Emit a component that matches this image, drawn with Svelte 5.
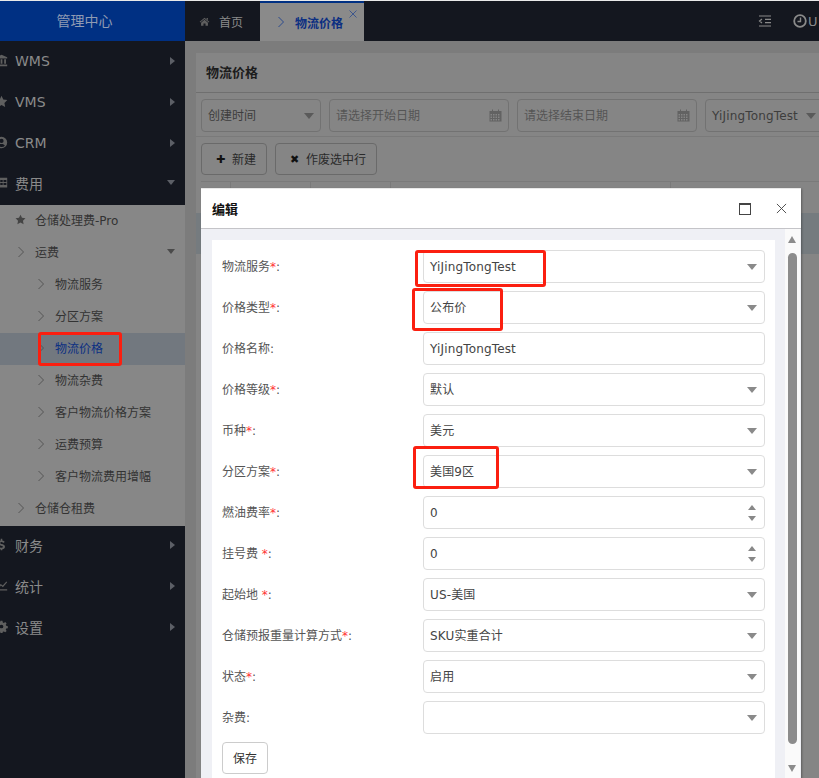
<script>
  const topMenu = [
    { icon: "bank", label: "WMS" },
    { icon: "star", label: "VMS" },
    { icon: "user", label: "CRM" },
    { icon: "table", label: "费用", open: true, cjk: true },
  ];
  const subMenu = [
    { label: "仓储处理费-Pro", level: 1, icon: "star" },
    { label: "运费", level: 1, open: true },
    { label: "物流服务", level: 2 },
    { label: "分区方案", level: 2 },
    { label: "物流价格", level: 2, active: true },
    { label: "物流杂费", level: 2 },
    { label: "客户物流价格方案", level: 2 },
    { label: "运费预算", level: 2 },
    { label: "客户物流费用增幅", level: 2 },
    { label: "仓储仓租费", level: 1 },
  ];
  const bottomMenu = [
    { icon: "money", label: "财务" },
    { icon: "chart", label: "统计" },
    { icon: "gear", label: "设置" },
  ];
  const fields = [
    { label: "物流服务", req: "*", value: "YiJingTongTest", type: "select" },
    { label: "价格类型", req: "*", value: "公布价", type: "select", cjk: true },
    { label: "价格名称", value: "YiJingTongTest", type: "text" },
    { label: "价格等级", req: "*", value: "默认", type: "select", cjk: true },
    { label: "币种", req: "*", value: "美元", type: "select", cjk: true },
    { label: "分区方案", req: "*", value: "美国9区", type: "select", cjk: true },
    { label: "燃油费率", req: "*", value: "0", type: "number" },
    { label: "挂号费 ", req: "*", value: "0", type: "number" },
    { label: "起始地 ", req: "*", value: "US-美国", type: "select", cjk: true },
    { label: "仓储预报重量计算方式", req: "*", value: "SKU实重合计", type: "select", cjk: true },
    { label: "状态", req: "*", value: "启用", type: "select", cjk: true },
    { label: "杂费", value: "", type: "select" },
  ];
</script>

{#snippet icon(name)}
  <svg class="ico" viewBox="0 0 16 16" fill="currentColor">
    {#if name === "bank"}
      <path d="M8 1l7 3v1.500H1V4zM2.500 6.500h2.200V12H2.500zM6.900 6.500h2.200V12H6.900zM11.300 6.500h2.200V12h-2.200zM1 13h14v2H1z" />
    {:else if name === "star"}
      <path d="M8 1l2.200 4.600 5 .7-3.600 3.500.9 5L8 12.400l-4.500 2.400.9-5L.8 6.300l5-.7z" />
    {:else if name === "user"}
      <path fill-rule="evenodd" d="M8 1a7 7 0 100 14A7 7 0 008 1zm0 2.500a2.600 2.600 0 110 5.200 2.600 2.600 0 010-5.200zM3.900 12c.6-1.600 2-2.300 4.100-2.300s3.500.7 4.100 2.300A5.500 5.500 0 018 13.500 5.500 5.500 0 013.900 12z" />
    {:else if name === "table"}
      <path fill-rule="evenodd" d="M1 2h14v12H1zm1 3v2.500h3.500V5zm4.500 0v2.500h3V5zm4 0v2.500H14V5zM2 8.500V11h3.500V8.500zm4.500 0V11h3V8.500zm4 0V11H14V8.500z" />
    {:else if name === "money"}
      <path d="M9 1v2c1.500.2 2.500 1 3 2l-2 1c-.4-.7-1-1-2-1-.9 0-1.500.4-1.500 1 0 .7.700 1 2.200 1.400C10.800 8 12.300 8.800 12.300 10.800c0 1.600-1.300 2.800-3.300 3.100V15H7v-1.100c-1.700-.2-2.800-1.100-3.300-2.300l2-1c.4.900 1.200 1.400 2.300 1.400 1.100 0 1.800-.4 1.800-1.100 0-.8-.7-1.100-2.300-1.500C5.600 8.900 4.100 8.100 4.100 6.200 4.100 4.600 5.300 3.400 7 3.100V1z" />
    {:else if name === "chart"}
      <path d="M1 2h1.500v10.500H15V14H1zM4 10l3-4 2.500 2L14 3l1 1-5.300 6L7.300 8l-2.300 3z" />
    {:else if name === "gear"}
      <path fill-rule="evenodd" d="M6.800 1h2.400l.4 2 1.300.6 1.700-1.100 1.700 1.700-1.100 1.700.6 1.300 2 .4v2.400l-2 .4-.6 1.300 1.100 1.700-1.700 1.700-1.700-1.100-1.300.6-.4 2H6.800l-.4-2-1.300-.6-1.700 1.100-1.700-1.700 1.100-1.700-.6-1.300-2-.4V6.600l2-.4.6-1.300-1.100-1.700 1.700-1.700 1.700 1.100 1.300-.6zM8 5.700a2.300 2.300 0 100 4.600 2.300 2.300 0 000-4.600z" />
    {/if}
  </svg>
{/snippet}

{#snippet chevron()}
  <svg class="chev" viewBox="0 0 8 12" fill="none" stroke="currentColor" stroke-width="1">
    <path d="M1.500 1l5 5-5 5" />
  </svg>
{/snippet}

{#snippet calendar()}
  <svg class="cal" viewBox="0 0 13 13" fill="currentColor">
    <path fill-rule="evenodd" d="M0.500 2h2.500V0.500h1V2h5V0.500h1V2h2.500v10.500H0.500zm1 3v1.500H3V5zm2.500 0v1.500h1.500V5zm2.500 0v1.500H8V5zm2.500 0v1.500h1.500V5zM1.500 7.500V9H3V7.500zm2.500 0V9h1.500V7.500zm2.500 0V9H8V7.500zm2.500 0V9h1.500V7.500zM1.500 10v1.500H3V10zm2.500 0v1.500h1.500V10zm2.500 0v1.500H8V10zm2.500 0v1.500h1.500V10z" />
  </svg>
{/snippet}

<div class="page">
  <aside class="sidebar">
    <div class="logo">管理中心</div>
    {#each topMenu as item}
      <div class="nav-item" class:cjk={item.cjk}>
        <span class="nav-icon">{@render icon(item.icon)}</span>
        <span class="nav-label">{item.label}</span>
        <span class={item.open ? "tri-down" : "tri-right"}></span>
      </div>
    {/each}
    <div class="submenu">
      {#each subMenu as item}
        <div class="sub-item" class:level2={item.level === 2} class:active={item.active}>
          {#if item.icon}
            <span class="sub-star">{@render icon(item.icon)}</span>
          {:else}
            {@render chevron()}
          {/if}
          <span class="sub-label">{item.label}</span>
          {#if item.open}<span class="tri-down sub-tri"></span>{/if}
        </div>
      {/each}
    </div>
    {#each bottomMenu as item}
      <div class="nav-item cjk">
        <span class="nav-icon">{@render icon(item.icon)}</span>
        <span class="nav-label">{item.label}</span>
        <span class="tri-right"></span>
      </div>
    {/each}
  </aside>

  <div class="main">
    <header class="topbar">
      <div class="tab">
        <svg class="home" viewBox="0 0 16 16" fill="currentColor">
          <path d="M8 2.500l7 6-.8.9L8 4.200 1.800 9.400 1 8.500zM3 9.800l5-4.200 5 4.200V14H9.500v-3h-3v3H3zM11 3h2v3l-2-1.700z" />
        </svg>
        <span>首页</span>
      </div>
      <div class="tab current">
        {@render chevron()}
        <span>物流价格</span>
        <svg class="tab-close" viewBox="0 0 8 8" fill="none" stroke="currentColor" stroke-width="0.800">
          <path d="M0.500 0.500l7 7M7.500 0.500l-7 7" />
        </svg>
      </div>
      <div class="top-right">
        <svg class="outdent" viewBox="0 0 14 12" fill="none" stroke="currentColor" stroke-width="1.200">
          <path d="M1 1h12M7 4.300h6M7 7.600h6M1 11h12M4 4L1.500 6 4 8" />
        </svg>
        <svg class="clock" viewBox="0 0 14 14" fill="none" stroke="currentColor" stroke-width="1.800">
          <circle cx="7" cy="7" r="5.800" />
          <path d="M7.500 3.500V7.500H4.500" stroke-width="1.400" />
        </svg>
        <span class="user">U</span>
      </div>
    </header>

    <section class="panel">
      <h2 class="panel-title">物流价格</h2>
      <div class="filters">
        <div class="control w120"><span class="cjk">创建时间</span><i class="caret"></i></div>
        <div class="control w180 hint"><span class="cjk">请选择开始日期</span>{@render calendar()}</div>
        <div class="control w180 hint"><span class="cjk">请选择结束日期</span>{@render calendar()}</div>
        <div class="control w150"><span class="latin">YiJingTongTest</span><i class="caret"></i></div>
      </div>
      <div class="actions">
        <div class="btn"><b class="btn-mark">✚</b><span class="cjk">新建</span></div>
        <div class="btn"><b class="btn-mark">✖</b><span class="cjk">作废选中行</span></div>
      </div>
      <div class="table-head">
        <span style="width: 30px"></span>
        <span style="width: 80px"></span>
        <span style="width: 80px"></span>
        <span style="width: 280px"></span>
        <span style="width: 200px"></span>
      </div>
      <div class="table-row"></div>
    </section>
  </div>

  <div class="dialog">
    <div class="dialog-head">
      <span class="dialog-title">编辑</span>
      <span class="dialog-tools">
        <i class="max-box"></i>
        <svg class="dialog-close" viewBox="0 0 12 12" fill="none" stroke="currentColor" stroke-width="1">
          <path d="M1 1l10 10M11 1L1 11" />
        </svg>
      </span>
    </div>
    <div class="dialog-body">
      <form class="form">
        {#each fields as f}
          <div class="row">
            <span class="row-label cjk">{f.label}{#if f.req}<em>{f.req}</em>{/if}:</span>
            <div class="input">
              <span class="latin" class:cjk={f.cjk}>{f.value}</span>
              {#if f.type === "select"}
                <i class="caret"></i>
              {:else if f.type === "number"}
                <span class="spin"><i></i><i></i></span>
              {/if}
            </div>
          </div>
        {/each}
        <div class="save"><span class="cjk">保存</span></div>
      </form>
      <div class="scrollbar">
        <i class="sb-up"></i>
        <i class="sb-thumb"></i>
        <i class="sb-down"></i>
      </div>
    </div>
  </div>

  <!-- red marks drawn on the screenshot -->
  <i class="mark" style="left: 415px; top: 250px; width: 131px; height: 37px"></i>
  <i class="mark" style="left: 412px; top: 288px; width: 91px; height: 43px"></i>
  <i class="mark" style="left: 413px; top: 446px; width: 86px; height: 43px"></i>
  <i class="mark" style="left: 38px; top: 332px; width: 84px; height: 34px"></i>
</div>

<style>
  :global(body) {
    margin: 0;
  }

  .page {
    position: relative;
    display: flex;
    width: 819px;
    height: 778px;
    overflow: hidden;
    padding-top: 1px;
    box-sizing: border-box;
    background: #e9e9e9;
    font-family: "DejaVu Sans", "Noto Sans CJK SC", sans-serif;
    font-size: 12px;
    color: #555;
  }

  .cjk {
    padding-bottom: 2px;
  }

  .latin {
    letter-spacing: 0.15px;
  }

  .sidebar {
    flex: 0 0 185px;
    background: #14171f;
    color: #8a8a8a;
  }

  .logo {
    height: 40px;
    line-height: 40px;
    padding-right: 16px;
    box-sizing: border-box;
    text-align: center;
    background: #003083;
    color: #8f9bb3;
    font-size: 14px;
  }

  .nav-item {
    display: flex;
    align-items: center;
    height: 41px;
    padding-bottom: 2px;
    box-sizing: border-box;
    font-size: 14px;
  }

  .nav-item.cjk {
    padding-bottom: 4px;
  }

  .nav-icon {
    display: flex;
    width: 17px;
    margin-left: -5px;
    margin-right: 3px;
    color: #5f5f5f;
  }

  .ico {
    width: 13px;
    height: 13px;
  }

  .nav-label {
    flex: 1;
  }

  .tri-right {
    width: 0;
    height: 0;
    margin-right: 10px;
    border-left: 5px solid #5c5f66;
    border-top: 4px solid transparent;
    border-bottom: 4px solid transparent;
  }

  .tri-down {
    width: 0;
    height: 0;
    margin-right: 10px;
    border-top: 5px solid #5c5f66;
    border-left: 4px solid transparent;
    border-right: 4px solid transparent;
  }

  .submenu {
    padding: 0 0 1px;
    background: #878787;
    color: #333;
  }

  .sub-item {
    display: flex;
    align-items: center;
    height: 32px;
    padding-left: 17px;
    padding-bottom: 3px;
    box-sizing: border-box;
  }

  .sub-item.level2 {
    padding-left: 37px;
  }

  .sub-item.active {
    background: #72787f;
    color: #0c2f82;
  }

  .sub-item:first-child {
    padding-left: 15px;
  }

  .sub-star {
    display: flex;
    width: 20px;
    color: #444;
  }

  .sub-star .ico {
    width: 11px;
    height: 11px;
  }

  .chev {
    width: 8px;
    height: 12px;
    margin-right: 10px;
    color: #555;
    flex: none;
  }

  .sub-label {
    flex: 1;
  }

  .sub-tri {
    border-top-color: #4a4a4a;
  }

  .main {
    flex: 1;
    min-width: 0;
    background: #7c7c7c;
  }

  .topbar {
    display: flex;
    height: 40px;
    background: #14171f;
    color: #8a8a8a;
  }

  .tab {
    display: flex;
    align-items: center;
    width: 75px;
    padding-left: 14px;
    box-sizing: border-box;
  }

  .tab.current {
    position: relative;
    width: 104px;
    padding-left: 17px;
    background: #8a8a8a;
    border-top: 2px solid #003083;
    color: #0c2f82;
    font-weight: 700;
  }

  .tab.current .chev {
    color: #2b4a8e;
  }

  .home {
    width: 11px;
    height: 11px;
    margin-right: 9px;
    color: #5f5f5f;
  }

  .tab-close {
    position: absolute;
    top: 7px;
    right: 7px;
    width: 8px;
    height: 8px;
    color: #2b4a8e;
  }

  .top-right {
    display: flex;
    align-items: center;
    margin-left: auto;
    color: #8a8a8a;
  }

  .outdent {
    width: 14px;
    height: 12px;
    margin-right: 21px;
  }

  .clock {
    width: 14px;
    height: 14px;
    margin-right: 1px;
  }

  .user {
    width: 11px;
    font-size: 13px;
    overflow: hidden;
  }

  .panel {
    margin: 12px 0 0 11px;
    width: 700px;
    height: 726px;
    background: #858585;
  }

  .panel-title {
    margin: 0;
    height: 40px;
    line-height: 40px;
    padding-left: 10px;
    font-size: 13px;
    color: #1c1c1c;
    border-bottom: 1px solid #6f6f6f;
    box-sizing: border-box;
  }

  .filters {
    display: flex;
    gap: 8px;
    height: 44px;
    padding: 6px 0 0 5px;
    box-sizing: border-box;
    border-bottom: 1px solid #7a7a7a;
  }

  .control {
    display: flex;
    align-items: center;
    justify-content: space-between;
    height: 33px;
    padding: 0 6px;
    box-sizing: border-box;
    border: 1px solid #727272;
    border-radius: 4px;
    flex: none;
    color: #3d3d3d;
  }

  .w120 {
    width: 120px;
  }

  .w180 {
    width: 180px;
  }

  .w150 {
    width: 150px;
    justify-content: flex-start;
    gap: 8px;
  }

  .hint {
    color: #555;
  }

  .cal {
    width: 13px;
    height: 13px;
    color: #626262;
  }

  .caret {
    flex: none;
    width: 0;
    height: 0;
    border-top: 6px solid #5a5a5a;
    border-left: 5px solid transparent;
    border-right: 5px solid transparent;
  }

  .actions {
    display: flex;
    gap: 8px;
    height: 44px;
    padding: 6px 0 0 5px;
    box-sizing: border-box;
  }

  .btn {
    display: flex;
    align-items: center;
    height: 32px;
    padding: 0 10px 0 14px;
    box-sizing: border-box;
    border: 1px solid #6a6a6a;
    border-radius: 4px;
    color: #2a2a2a;
  }

  .btn-mark {
    width: 14px;
    margin-right: 2px;
    font-size: 11px;
    color: #111;
  }

  .table-head {
    display: flex;
    height: 32px;
    margin-left: 5px;
    border-top: 1px solid #7a7a7a;
    box-sizing: border-box;
  }

  .table-head span {
    box-sizing: border-box;
    border-right: 1px solid #7a7a7a;
    flex: none;
  }

  .table-row {
    height: 41px;
    background: #757b7f;
  }

  .dialog {
    position: absolute;
    left: 201px;
    top: 188px;
    width: 600px;
    height: 600px;
    background: #fff;
    box-shadow: 1px 1px 2px rgba(0, 0, 0, 0.3);
  }

  .dialog-head {
    display: flex;
    align-items: center;
    justify-content: space-between;
    height: 41px;
    padding: 0 14px 0 11px;
    box-sizing: border-box;
    border-bottom: 1px solid #c4c4c8;
    border-top: 1px solid #e8e8e8;
  }

  .dialog-title {
    font-size: 13px;
    font-weight: 700;
    color: #111;
  }

  .dialog-tools {
    display: flex;
    align-items: center;
    gap: 25px;
  }

  .max-box {
    width: 10px;
    height: 9px;
    border: 1px solid #444;
    border-top-width: 2px;
  }

  .dialog-close {
    width: 11px;
    height: 11px;
    color: #444;
  }

  .dialog-body {
    display: flex;
    height: 549px;
    padding-left: 11px;
    background: #eff0f5;
  }

  .form {
    flex: none;
    width: 563px;
    margin: 11px 10px 0 0;
    padding: 10px 10px 0;
    box-sizing: border-box;
    background: #fff;
  }

  .row {
    display: flex;
    align-items: center;
    height: 33px;
    margin-bottom: 8px;
  }

  .row-label {
    width: 201px;
    color: #555;
    white-space: pre;
  }

  .row-label em {
    font-style: normal;
    color: #f33;
  }

  .input {
    display: flex;
    align-items: center;
    justify-content: space-between;
    width: 342px;
    height: 33px;
    padding: 0 7px 0 6px;
    box-sizing: border-box;
    border: 1px solid #ddd;
    border-radius: 4px;
    color: #444;
  }

  .input .caret {
    border-top-color: #8a8a8a;
  }

  .spin {
    display: flex;
    flex-direction: column;
    gap: 6px;
    margin-right: 1px;
  }

  .spin i {
    width: 0;
    height: 0;
    border-left: 4px solid transparent;
    border-right: 4px solid transparent;
    border-bottom: 5px solid #888;
  }

  .spin i:last-child {
    border-bottom: 0;
    border-top: 5px solid #888;
  }

  .save {
    display: inline-flex;
    align-items: center;
    justify-content: center;
    width: 46px;
    height: 32px;
    box-sizing: border-box;
    border: 1px solid #ccc;
    border-radius: 4px;
    color: #333;
  }

  .scrollbar {
    position: relative;
    flex: none;
    width: 15px;
    background: #fafafa;
  }

  .sb-up,
  .sb-down {
    position: absolute;
    left: 3px;
    width: 0;
    height: 0;
    border-left: 4.500px solid transparent;
    border-right: 4.500px solid transparent;
  }

  .sb-up {
    top: 7px;
    border-bottom: 7px solid #8c8c8c;
  }

  .sb-down {
    top: 536px;
    border-top: 7px solid #8c8c8c;
  }

  .sb-thumb {
    position: absolute;
    left: 3px;
    top: 24px;
    width: 9px;
    height: 491px;
    border-radius: 5px;
    background: #8c8c8c;
  }

  .mark {
    position: absolute;
    box-sizing: border-box;
    border: 3px solid #fb1f10;
    border-radius: 3px;
  }
</style>
